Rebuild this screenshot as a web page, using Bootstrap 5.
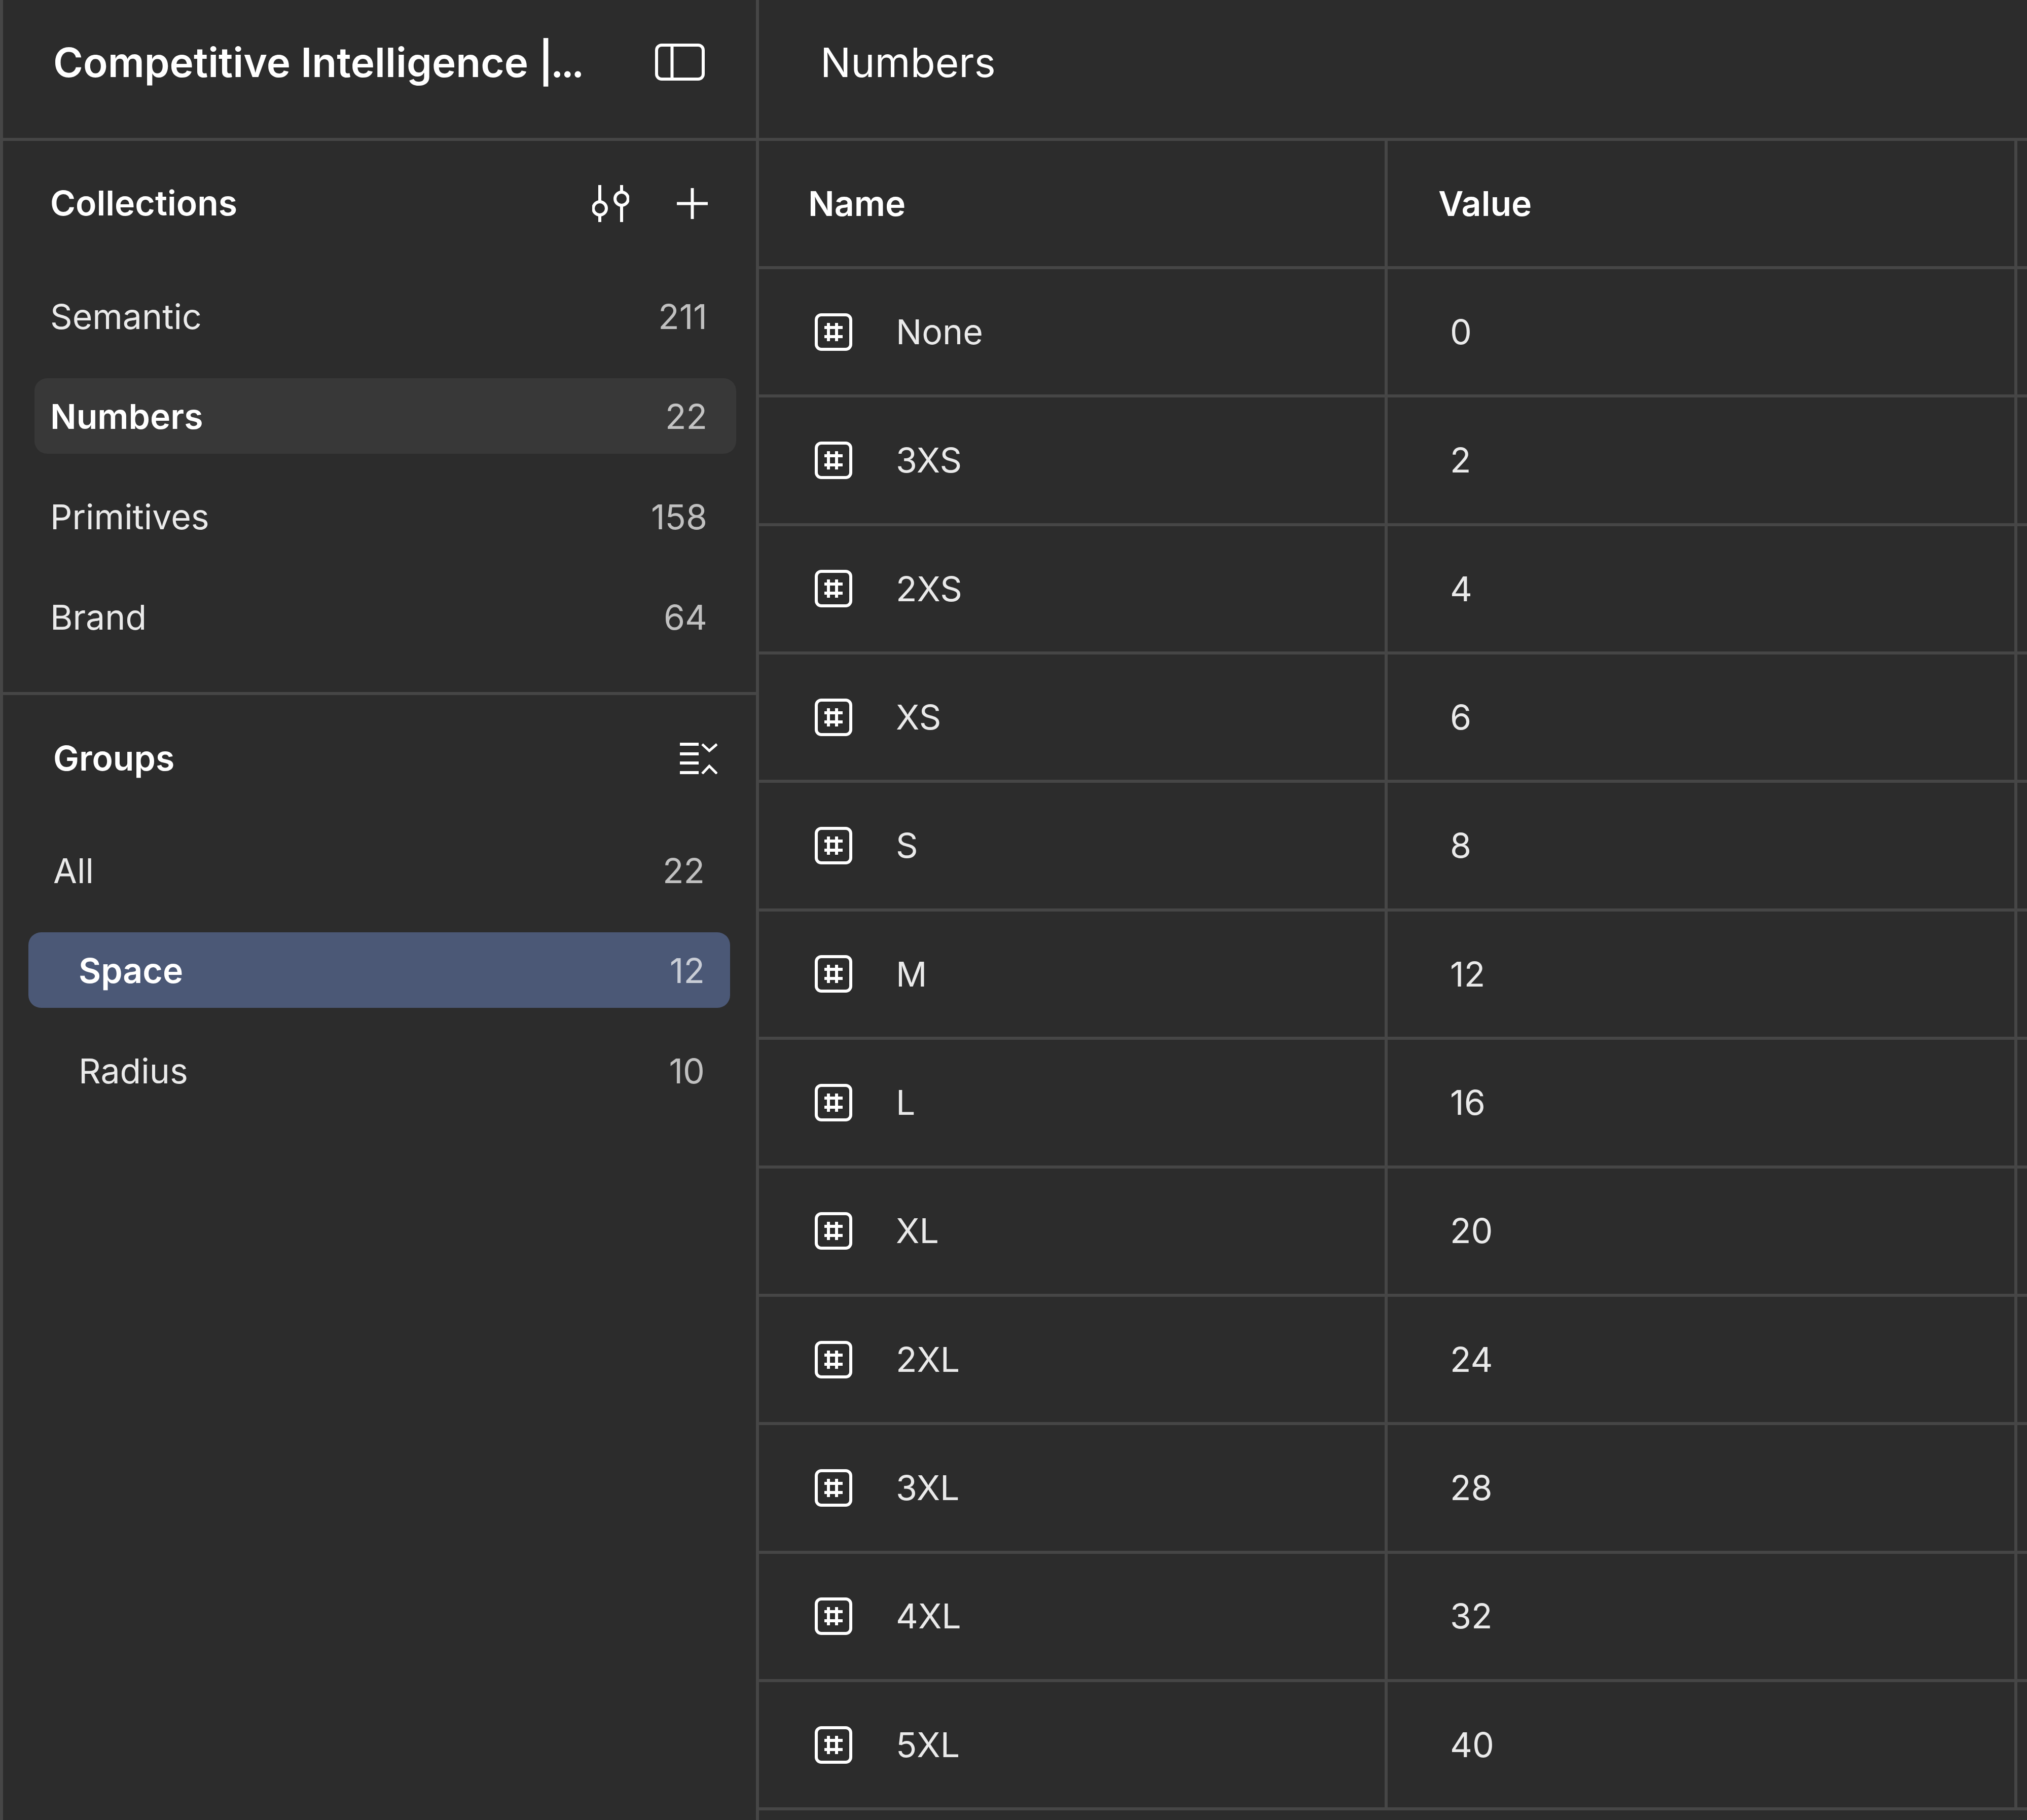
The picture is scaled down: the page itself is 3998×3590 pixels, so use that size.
<!DOCTYPE html>
<html lang="en">
<head>
  <meta charset="UTF-8">
  <title>Numbers</title>
  <link href="https://cdn.jsdelivr.net/npm/bootstrap@5.3.0/dist/css/bootstrap.min.css" rel="stylesheet">
  <style>
    body {
      background-color: #2c2c2c;
      color: #fff;
      font-family: "Inter", "Liberation Sans", sans-serif;
      font-size: 68px;
      line-height: 1.2;
    }
    svg { display: block; flex-shrink: 0; fill: none; stroke: #fff; stroke-width: 6; }
    .app { min-height: 3590px; }
    .sidebar { width: 1497px; flex-shrink: 0; border-left: 6px solid #464646; border-right: 6px solid #464646; }
    .brand { height: 278px; padding: 0 101px 27px 99px; border-bottom: 6px solid #464646; }
    .brand-title { font-size: 80px; font-weight: 600; white-space: nowrap; }
    .brand-title span { letter-spacing: -5px; }
    .section-title { font-size: 68px; font-weight: 600; }
    .collections-head { height: 244px; margin-bottom: 27px; padding: 2px 95px 0 93px; }
    .collections { padding-bottom: 74px; border-bottom: 6px solid #464646; }
    .groups-head { height: 250px; margin-bottom: 21px; padding: 0 76px 0 99px; }
    .side-list { gap: 49px; width: 1384px; border-radius: 0; }
    .collections .side-list { margin-left: 62px; }
    .groups .side-list { margin-left: 50px; }
    .side-list .list-group-item {
      height: 149px;
      padding: 2px 57px 0 31px;
      background: transparent;
      color: rgba(255, 255, 255, .9);
      border: 0;
      border-radius: 25px;
      font-size: 68px;
    }
    .groups .list-group-item { padding: 2px 50px 0 49px; }
    .groups .list-group-item.child { padding-left: 99px; }
    .side-list .list-group-item.active { background: #383838; color: #fff; font-weight: 600; }
    .groups .list-group-item.active { background: #4b5876; }
    .count { color: rgba(255, 255, 255, .7); font-weight: 400; }
    .icon-sliders { margin-right: 94px; }
    .topbar { height: 278px; padding: 0 0 27px 121px; border-bottom: 6px solid #464646; font-size: 80px; }
    .tokens { width: 2501px; table-layout: fixed; border-collapse: separate; border-spacing: 0; margin: 0; --bs-table-bg: transparent; --bs-table-color: #fff; color: #fff; }
    .tokens th, .tokens td {
      padding: 0;
      border-bottom: 6px solid #464646;
      border-top: 0;
      vertical-align: middle;
      box-shadow: none;
    }
    .tokens th { height: 253px; font-weight: 600; font-size: 68px; }
    .tokens td { height: 253.36px; font-size: 68px; color: rgba(255, 255, 255, .9); }
    .tokens .col-name { width: 1240px; border-right: 6px solid #464646; padding-left: 97px; }
    .tokens .col-value { width: 1242px; border-right: 6px solid #464646; padding-left: 100px; }
    .tokens td.col-name { padding-left: 110px; }
    .tokens td.col-value { padding-left: 123px; }
    .token-name { gap: 86px; }
  </style>
</head>
<body>
  <div class="app d-flex">
    <aside class="sidebar d-flex flex-column">
      <div class="brand d-flex align-items-center justify-content-between">
        <span class="brand-title">Competitive Intelligence <span>|...</span></span>
        <svg width="98" height="73" viewBox="0 0 98 73"><rect x="3" y="3" width="92" height="67" rx="10"/><path d="M33.500 3V70"/></svg>
      </div>

      <section class="collections">
        <div class="collections-head d-flex align-items-center justify-content-between">
          <span class="section-title">Collections</span>
          <div class="d-flex align-items-center">
            <svg class="icon-sliders" width="73" height="73" viewBox="0 0 73 73"><path d="M15 0V33M15 60V73M58 0V13M58 40V73"/><circle cx="15" cy="46" r="13"/><circle cx="58" cy="27" r="13"/></svg>
            <svg width="61" height="61" viewBox="0 0 61 61"><path d="M30.500 0V61M0 30.500H61"/></svg>
          </div>
        </div>
        <div class="list-group side-list">
          <a class="list-group-item d-flex align-items-center justify-content-between"><span>Semantic</span><span class="count">211</span></a>
          <a class="list-group-item active d-flex align-items-center justify-content-between"><span>Numbers</span><span class="count">22</span></a>
          <a class="list-group-item d-flex align-items-center justify-content-between"><span>Primitives</span><span class="count">158</span></a>
          <a class="list-group-item d-flex align-items-center justify-content-between"><span>Brand</span><span class="count">64</span></a>
        </div>
      </section>

      <section class="groups">
        <div class="groups-head d-flex align-items-center justify-content-between">
          <span class="section-title">Groups</span>
          <svg width="74" height="62" viewBox="0 0 74 62"><path d="M0 3H37M0 22H37M0 40H37M0 59H37"/><path stroke-width="5" d="M44 3L58 16L73 3M44 61L58 46L73 61"/></svg>
        </div>
        <div class="list-group side-list">
          <a class="list-group-item d-flex align-items-center justify-content-between"><span>All</span><span class="count">22</span></a>
          <a class="list-group-item child active d-flex align-items-center justify-content-between"><span>Space</span><span class="count">12</span></a>
          <a class="list-group-item child d-flex align-items-center justify-content-between"><span>Radius</span><span class="count">10</span></a>
        </div>
      </section>
    </aside>

    <main class="flex-grow-1">
      <div class="topbar d-flex align-items-center">Numbers</div>
      <table class="table tokens">
        <thead>
          <tr><th class="col-name">Name</th><th class="col-value">Value</th><th></th></tr>
        </thead>
        <tbody id="rows"></tbody>
      </table>
    </main>
  </div>

  <script src="https://cdn.jsdelivr.net/npm/bootstrap@5.3.0/dist/js/bootstrap.bundle.min.js"></script>
  <script>
    const tokens = [["None", 0], ["3XS", 2], ["2XS", 4], ["XS", 6], ["S", 8], ["M", 12], ["L", 16], ["XL", 20], ["2XL", 24], ["3XL", 28], ["4XL", 32], ["5XL", 40]];
    const icon = '<svg width="74" height="74" viewBox="0 0 74 74"><rect x="3" y="3" width="68" height="68" rx="10"/><path d="M27 19V55M43 19V55M19 28H55M19 46H55"/></svg>';
    document.getElementById("rows").innerHTML = tokens.map(t =>
      `<tr><td class="col-name"><div class="token-name d-flex align-items-center">${icon}<span>${t[0]}</span></div></td><td class="col-value">${t[1]}</td><td></td></tr>`
    ).join("");
  </script>
</body>
</html>
